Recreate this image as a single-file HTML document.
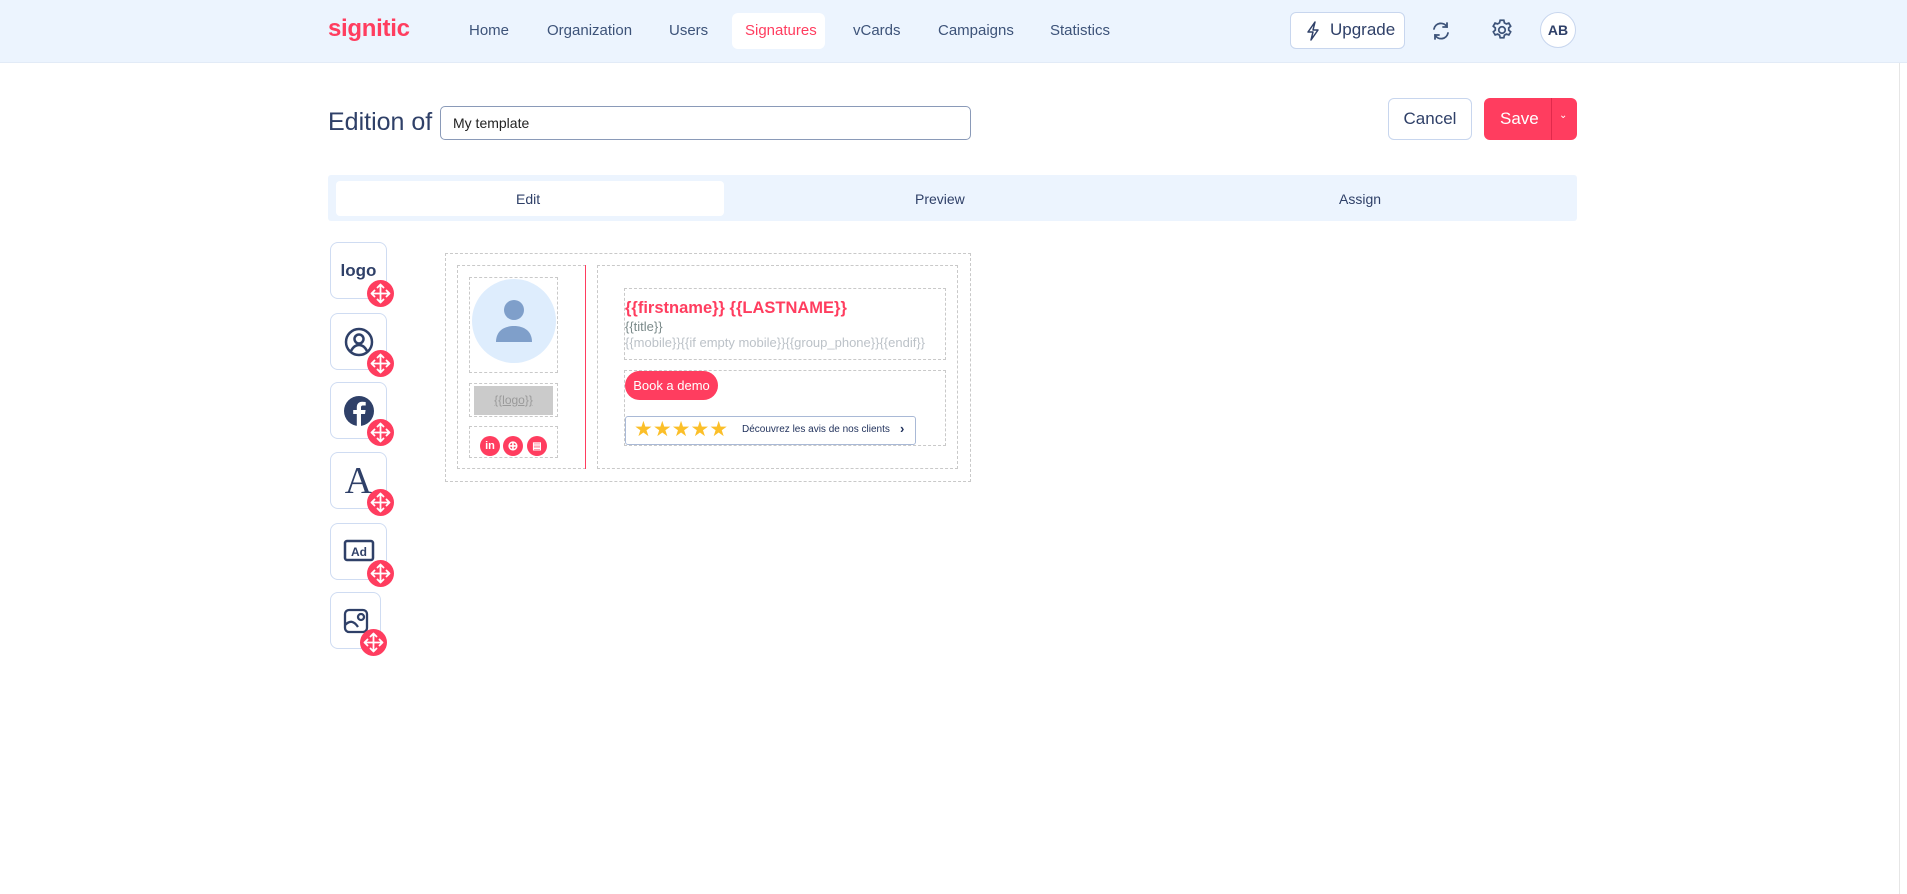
<!DOCTYPE html>
<html><head><meta charset="utf-8"><style>
*{box-sizing:border-box;margin:0;padding:0}
body{width:1907px;height:894px;background:#fff;font-family:"Liberation Sans",sans-serif;color:#2f4068;position:relative;overflow:hidden}
.abs{position:absolute}
.hdr{left:0;top:0;width:1907px;height:63px;background:#ecf4fe;border-bottom:1px solid #e2ebf7}
.nav{top:22px;font-size:15px;color:#3d5379}
.pill{left:732px;top:13px;width:93px;height:36px;background:#fff;border-radius:6px}
.btn{border:1px solid #c8d6ee;border-radius:6px;background:#fff}
.tile{width:57px;height:57px;border:1px solid #cfdcf2;border-radius:8px;background:#fff;display:flex;align-items:center;justify-content:center}
.move{width:27px;height:27px;border-radius:50%;background:#ff3d5f;display:flex;align-items:center;justify-content:center}
.dash{border:1px dashed #c9c9c9}
.soc{width:20px;height:20px;border-radius:50%;background:#ff3d5f;color:#fff;font-size:11px;font-weight:bold;display:flex;align-items:center;justify-content:center;top:436px}
</style></head><body>
<div class="abs hdr"></div>
<div class="abs" style="left:328px;top:15px;font-size:24px;font-weight:bold;color:#ff3d5f;letter-spacing:-0.3px">signitic</div>
<div class="abs pill"></div>
<div class="abs nav" style="left:469px">Home</div>
<div class="abs nav" style="left:547px">Organization</div>
<div class="abs nav" style="left:669px">Users</div>
<div class="abs nav" style="left:745px;color:#ff3d5f">Signatures</div>
<div class="abs nav" style="left:853px">vCards</div>
<div class="abs nav" style="left:938px">Campaigns</div>
<div class="abs nav" style="left:1050px">Statistics</div>
<div class="abs btn" style="left:1290px;top:12px;width:115px;height:37px"></div>
<svg class="abs" style="left:1304px;top:20px" width="18" height="22" viewBox="0 0 18 22"><path d="M11 2 L4 12 H9 L7 20 L14 10 H9 Z" fill="none" stroke="#2f4068" stroke-width="1.5" stroke-linejoin="round"/></svg>
<div class="abs" style="left:1330px;top:20px;font-size:17px;color:#2f4068">Upgrade</div>
<svg class="abs" style="left:1429px;top:19px" width="24" height="24" viewBox="0 0 24 24" fill="none" stroke="#3d5379" stroke-width="1.8" stroke-linecap="round"><path d="M5 10a7 7 0 0 1 13-2M19 14a7 7 0 0 1-13 2"/><path d="M18 4v4h-4M6 20v-4h4"/></svg>
<svg class="abs" style="left:1489px;top:17px" width="26" height="26" viewBox="0 0 24 24" fill="none" stroke="#3d5379" stroke-width="1.6"><circle cx="12" cy="12" r="3"/><path d="M10.3 3h3.4l.5 2.4 1.8 1 2.3-.8 1.7 2.9-1.8 1.6v2l1.8 1.6-1.7 2.9-2.3-.8-1.8 1-.5 2.4h-3.4l-.5-2.4-1.8-1-2.3.8-1.7-2.9 1.8-1.6v-2L3.9 8.5l1.7-2.9 2.3.8 1.8-1z"/></svg>
<div class="abs" style="left:1540px;top:12px;width:36px;height:36px;border-radius:50%;background:#fff;border:1px solid #c8d6ee;font-size:14px;font-weight:bold;display:flex;align-items:center;justify-content:center">AB</div>
<div class="abs" style="left:1899px;top:63px;width:1px;height:831px;background:#e6e6e6"></div>

<div class="abs" style="left:328px;top:108px;font-size:25px;color:#2f4068">Edition of</div>
<div class="abs" style="left:440px;top:106px;width:531px;height:34px;border:1px solid #8a9ab8;border-radius:5px;font-size:14px;padding:8px 12px;color:#222">My template</div>
<div class="abs btn" style="left:1388px;top:98px;width:84px;height:42px;font-size:17px;display:flex;align-items:center;justify-content:center">Cancel</div>
<div class="abs" style="left:1484px;top:98px;width:93px;height:42px;background:#ff3d5f;border-radius:6px"></div>
<div class="abs" style="left:1500px;top:109px;font-size:17px;color:#fff">Save</div>
<div class="abs" style="left:1551px;top:98px;width:1px;height:42px;background:#e02a4c"></div>
<div class="abs" style="left:1559px;top:110px;font-size:10px;color:#fff">⌄</div>

<div class="abs" style="left:328px;top:175px;width:1249px;height:46px;background:#ecf4fe;border-radius:3px"></div>
<div class="abs" style="left:336px;top:181px;width:388px;height:35px;background:#fff;border-radius:4px"></div>
<div class="abs" style="left:516px;top:191px;font-size:14px">Edit</div>
<div class="abs" style="left:915px;top:191px;font-size:14px">Preview</div>
<div class="abs" style="left:1339px;top:191px;font-size:14px">Assign</div>

<div class="abs tile" style="left:330px;top:242px"><span style="font-size:17px;font-weight:bold">logo</span></div>
<div class="abs tile" style="left:330px;top:313px"><svg width="32" height="32" viewBox="0 0 32 32" fill="none" stroke="#2f4068" stroke-width="2.5"><circle cx="16" cy="16" r="13"/><circle cx="16" cy="13" r="4.5"/><path d="M8 25c2-4 5-6 8-6s6 2 8 6"/></svg></div>
<div class="abs tile" style="left:330px;top:382px"><svg width="32" height="32" viewBox="0 0 32 32"><circle cx="16" cy="16" r="15" fill="#2f4068"/><path d="M18 31V19h4l.6-4H18v-2.5c0-1.2.4-2 2-2h2.7V7a30 30 0 0 0-3.5-.2c-3.4 0-5.4 2-5.4 5.6V15h-3.6v4h3.6v12z" fill="#fff"/></svg></div>
<div class="abs tile" style="left:330px;top:452px"><span style="font-family:'Liberation Serif',serif;font-size:38px;color:#2f4068">A</span></div>
<div class="abs tile" style="left:330px;top:523px"><svg width="32" height="26" viewBox="0 0 32 26"><rect x="2" y="2" width="28" height="19" rx="2" fill="none" stroke="#2f4068" stroke-width="2.5"/><text x="16" y="17" font-size="12" font-weight="bold" text-anchor="middle" fill="#2f4068" font-family="Liberation Sans">Ad</text></svg></div>
<div class="abs tile" style="left:330px;top:592px;width:51px"><svg width="28" height="28" viewBox="0 0 28 28" fill="none" stroke="#2f4068" stroke-width="2.3"><rect x="3" y="3" width="22" height="22" rx="4"/><circle cx="19" cy="10" r="3"/><path d="M3 18c5-5 9-4 13 2"/></svg></div>
<div class="abs move" style="left:367px;top:280px"></div>
<div class="abs move" style="left:367px;top:350px"></div>
<div class="abs move" style="left:367px;top:419px"></div>
<div class="abs move" style="left:367px;top:489px"></div>
<div class="abs move" style="left:367px;top:560px"></div>
<div class="abs move" style="left:360px;top:629px"></div>
<svg class="abs" style="left:0;top:0;pointer-events:none" width="420" height="670">
<defs><g id="mv" fill="none" stroke="#fff" stroke-width="1.8" stroke-linecap="round" stroke-linejoin="round"><path d="M0-9V9M-9 0H9M-3-6 0-9 3-6M-3 6 0 9 3 6M-6-3-9 0-6 3M6-3 9 0 6 3"/></g></defs>
<use href="#mv" x="380.5" y="293.5"/><use href="#mv" x="380.5" y="363.5"/><use href="#mv" x="380.5" y="432.5"/><use href="#mv" x="380.5" y="502.5"/><use href="#mv" x="380.5" y="573.5"/><use href="#mv" x="373.5" y="642.5"/>
</svg>

<div class="abs dash" style="left:445px;top:253px;width:526px;height:229px"></div>
<div class="abs dash" style="left:457px;top:265px;width:129px;height:204px"></div>
<div class="abs" style="left:585px;top:265px;width:1px;height:204px;background:#ff3d5f"></div>
<div class="abs dash" style="left:597px;top:265px;width:361px;height:204px"></div>
<div class="abs dash" style="left:469px;top:277px;width:89px;height:96px"></div>
<div class="abs" style="left:472px;top:279px;width:84px;height:84px;border-radius:50%;background:#deedfd"></div>
<svg class="abs" style="left:492px;top:296px" width="44" height="50" viewBox="0 0 44 50"><circle cx="22" cy="14" r="10" fill="#7f9fca"/><path d="M4 46c0-11 8-16 18-16s18 5 18 16z" fill="#7f9fca"/></svg>
<div class="abs dash" style="left:469px;top:383px;width:89px;height:34px"></div>
<div class="abs" style="left:474px;top:386px;width:79px;height:29px;background:#cbcbcb;color:#9a9a9a;font-size:12px;text-align:center;line-height:29px;text-decoration:underline">{{logo}}</div>
<div class="abs dash" style="left:469px;top:426px;width:89px;height:32px"></div>
<div class="abs soc" style="left:480px">in</div>
<div class="abs soc" style="left:503px;font-size:13px">⊕</div>
<div class="abs soc" style="left:527px;font-size:10px">▤</div>

<div class="abs dash" style="left:624px;top:288px;width:322px;height:72px"></div>
<div class="abs" style="left:625px;top:299px;font-size:16.5px;font-weight:bold;color:#ff3d5f">{{firstname}} {{LASTNAME}}</div>
<div class="abs" style="left:625px;top:319px;font-size:13px;color:#7b8a8a">{{title}}</div>
<div class="abs" style="left:625px;top:335px;font-size:13px;color:#bcc2c8;white-space:nowrap">{{mobile}}{{if empty mobile}}{{group_phone}}{{endif}}</div>
<div class="abs dash" style="left:624px;top:370px;width:322px;height:76px"></div>
<div class="abs" style="left:625px;top:371px;width:93px;height:29px;border-radius:15px;background:#ff3d5f;color:#fff;font-size:13px;text-align:center;line-height:29px">Book a demo</div>
<div class="abs" style="left:625px;top:416px;width:291px;height:29px;border:1px solid #a9b9d6;border-radius:3px"></div>
<div class="abs" style="left:634px;top:417px;font-size:21px;color:#fbbf29;letter-spacing:0px">★★★★★</div>
<div class="abs" style="left:742px;top:424px;font-size:10px;color:#1e2f5a">Découvrez les avis de nos clients</div>
<div class="abs" style="left:900px;top:421px;font-size:13px;font-weight:bold;color:#1e2f5a">›</div>
</body></html>
